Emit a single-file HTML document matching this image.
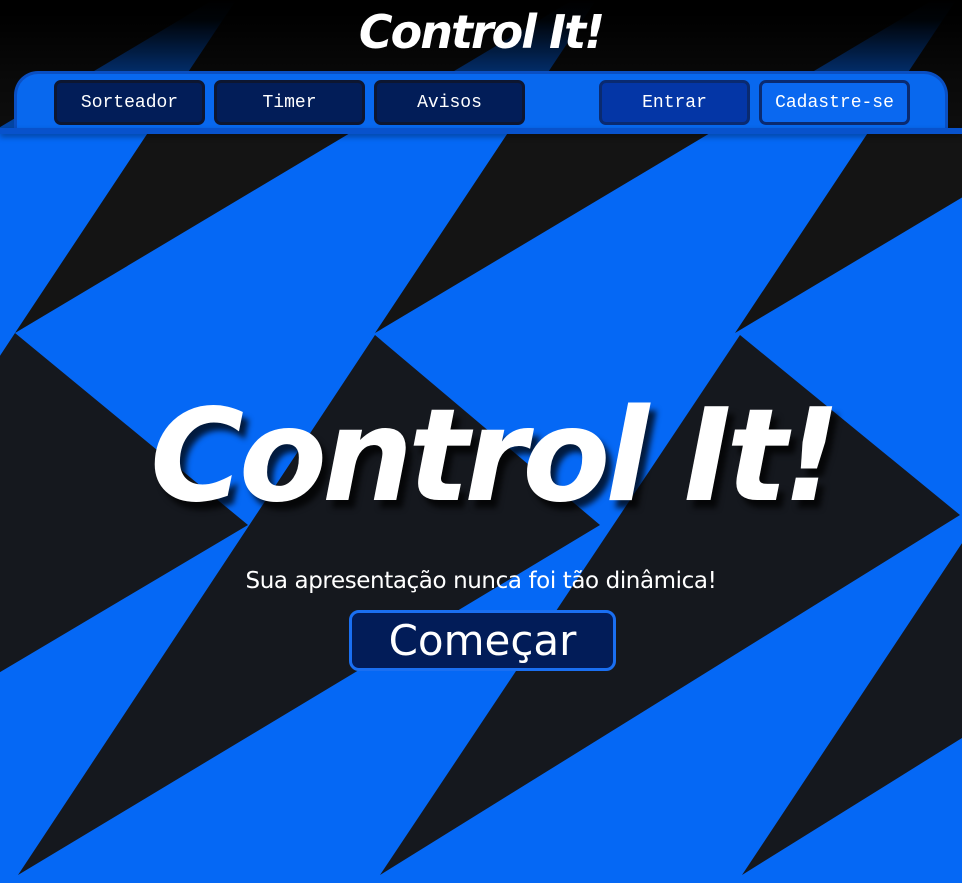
<!DOCTYPE html>
<html><head><meta charset="utf-8"><style>
*{margin:0;padding:0;box-sizing:border-box}
body{width:962px;height:883px;overflow:hidden;background:#0568f5;position:relative;font-family:"Liberation Sans",sans-serif}
svg.bg{position:absolute;left:0;top:0}
.topfade{position:absolute;left:0;top:0;width:962px;height:133px;background:linear-gradient(#000 0px,rgba(0,0,0,.97) 20px,rgba(0,0,0,.55) 75px,rgba(0,0,0,.3) 133px)}
.title{position:absolute;left:0;width:962px;top:5px;text-align:center;color:#fff;font:italic bold 46px "DejaVu Sans","Liberation Sans",sans-serif;letter-spacing:-2px}
.nav{position:absolute;left:14px;top:71px;width:934px;height:62px;background:#0868ee;border:3px solid #0a4fc2;border-bottom:none;border-radius:24px 24px 0 0}
.navline{position:absolute;left:0;top:128px;width:962px;height:6px;background:#0852cc;box-shadow:0 3px 6px rgba(0,0,0,.35)}
.btn{position:absolute;top:80px;height:45px;width:151px;border:3px solid #0d1630;border-radius:7px;background:#021d58;color:#fff;font:18px "Liberation Mono",monospace;text-align:center;line-height:40px}
.hero{position:absolute;left:12px;width:962px;top:382px;text-align:center;color:#fff;font:italic bold 128px "DejaVu Sans","Liberation Sans",sans-serif;letter-spacing:-5px;text-shadow:6px 8px 6px rgba(0,0,0,.75)}
.sub{position:absolute;left:0;width:962px;top:568px;text-align:center;color:#fff;font:23px "DejaVu Sans","Liberation Sans",sans-serif;letter-spacing:-.4px}
.go{position:absolute;left:349px;top:610px;width:267px;height:61px;background:#021c58;border:3px solid #1a6ff2;border-radius:10px;color:#fff;text-align:center;font:42px "DejaVu Sans","Liberation Sans",sans-serif;line-height:55px}
</style></head><body>
<svg class="bg" width="962" height="883" viewBox="0 0 962 883">
<g fill="#141414">
<polygon points="-124,0 213,0 -345,333"/>
<polygon points="236,0 573,0 15,333"/>
<polygon points="596,0 933,0 375,333"/>
<polygon points="956,0 1293,0 735,333"/>
</g>
<g fill="#15181e">
<polygon points="-345,333 -112,525 -702,875"/>
<polygon points="15,333 248,525 -342,875"/>
<polygon points="375,335 600,525 18,875"/>
<polygon points="740,335 960,515 380,875"/>
<polygon points="1100,335 1320,515 742,875"/>
</g>
</svg>
<div class="topfade"></div>
<div class="title">Control It!</div>
<div class="nav"></div>
<div class="navline"></div>
<div class="btn" style="left:54px">Sorteador</div>
<div class="btn" style="left:214px">Timer</div>
<div class="btn" style="left:374px">Avisos</div>
<div class="btn" style="left:599px;background:#0436a6;border-color:#0a2a70">Entrar</div>
<div class="btn" style="left:759px;background:#0a68f0;border-color:#0a2a70">Cadastre-se</div>
<div class="hero">Control It!</div>
<div class="sub">Sua apresentação nunca foi tão dinâmica!</div>
<div class="go">Começar</div>
</body></html>
